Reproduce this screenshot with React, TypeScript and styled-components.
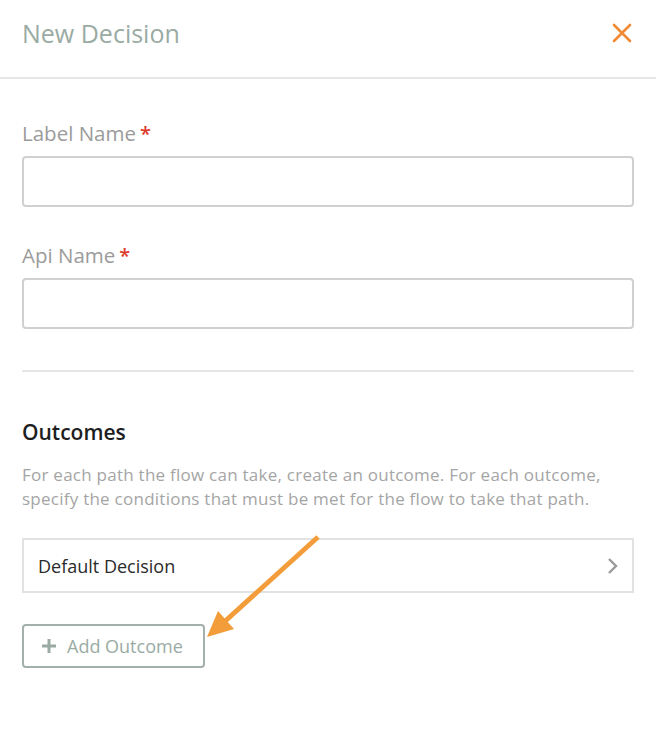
import React from "react";
import styled, { createGlobalStyle } from "styled-components";

const Global = createGlobalStyle`
  html, body { margin: 0; padding: 0; background: #ffffff; }
  body { font-family: "Open Sans", "Noto Sans", Arial, sans-serif; }
  * { box-sizing: border-box; }
`;

const Page = styled.div`
  position: relative;
  width: 656px;
  height: 742px;
  background: #fff;
  overflow: hidden;
`;

const Header = styled.header`
  display: flex;
  align-items: center;
  justify-content: space-between;
  height: 79px;
  padding: 0 22px 11px 22px;
  border-bottom: 2px solid #e6e6e6;
`;

const Title = styled.h1`
  margin: 0;
  font-size: 25px;
  font-weight: 400;
  line-height: 34px;
  color: #9aaba4;
`;

const CloseButton = styled.button`
  display: flex;
  align-items: center;
  justify-content: center;
  width: 24px;
  height: 24px;
  padding: 0;
  border: none;
  background: transparent;
  cursor: pointer;
`;

const Body = styled.div`
  display: flex;
  flex-direction: column;
  padding: 40px 22px 0 22px;
`;

const Field = styled.div<{ $gap?: number }>`
  display: flex;
  flex-direction: column;
  gap: 8px;
  margin-bottom: ${(p) => p.$gap ?? 0}px;
`;

const Label = styled.label`
  display: flex;
  align-items: baseline;
  gap: 4px;
  font-size: 20.5px;
  line-height: 28px;
  color: #9b9b9b;
`;

const Required = styled.span`
  color: #e0392c;
  font-size: 20px;
  font-weight: 600;
`;

const Input = styled.input`
  width: 100%;
  height: 51px;
  border: 2px solid #d0d0d0;
  border-radius: 4px;
  padding: 0 12px;
  font-family: inherit;
  font-size: 16px;
  outline: none;
`;

const Divider = styled.hr`
  margin: 41px 0 0 0;
  border: none;
  border-top: 2px solid #e6e6e6;
`;

const SectionTitle = styled.h2`
  margin: 46px 0 0 0;
  font-size: 21px;
  font-weight: 600;
  line-height: 28px;
  color: #1e1e1e;
`;

const Description = styled.p`
  margin: 17px 0 0 0;
  font-size: 17px;
  letter-spacing: 0.25px;
  line-height: 24px;
  color: #a5a5a5;
`;

const OutcomeRow = styled.button`
  display: flex;
  align-items: center;
  justify-content: space-between;
  width: 100%;
  height: 55px;
  margin-top: 27px;
  padding: 0 14px 0 14px;
  border: 2px solid #e2e2e2;
  background: #fff;
  font-family: inherit;
  font-size: 18px;
  color: #2b2b2b;
  text-align: left;
  cursor: pointer;
`;

const AddButton = styled.button`
  display: flex;
  align-items: center;
  gap: 10px;
  align-self: flex-start;
  width: 183px;
  height: 44px;
  margin-top: 31px;
  padding: 0 0 0 17px;
  border: 2px solid #a3b0ac;
  border-radius: 4px;
  background: #fff;
  font-family: inherit;
  font-size: 18px;
  color: #9aaba4;
  cursor: pointer;
`;

const ArrowLayer = styled.svg`
  position: absolute;
  left: 0;
  top: 0;
  pointer-events: none;
`;

export default function App() {
  return (
    <>
      <Global />
      <Page>
        <Header>
          <Title>New Decision</Title>
          <CloseButton aria-label="Close">
            <svg width="20" height="20" viewBox="0 0 20 20">
              <path d="M2 2 L18 18 M18 2 L2 18" stroke="#f08a35" strokeWidth="2.6" strokeLinecap="round" />
            </svg>
          </CloseButton>
        </Header>
        <Body>
          <Field $gap={34}>
            <Label>
              Label Name<Required>*</Required>
            </Label>
            <Input />
          </Field>
          <Field>
            <Label>
              Api Name<Required>*</Required>
            </Label>
            <Input />
          </Field>
          <Divider />
          <SectionTitle>Outcomes</SectionTitle>
          <Description>
            For each path the flow can take, create an outcome. For each outcome, specify the conditions that must be met for the flow to take that path.
          </Description>
          <OutcomeRow>
            <span>Default Decision</span>
            <svg width="12" height="18" viewBox="0 0 12 18">
              <path d="M3 2 L10 9 L3 16" fill="none" stroke="#9a9a9a" strokeWidth="2.4" />
            </svg>
          </OutcomeRow>
          <AddButton>
            <svg width="16" height="16" viewBox="0 0 16 16">
              <path d="M8 1 V15 M1 8 H15" stroke="#9aaba4" strokeWidth="3" />
            </svg>
            Add Outcome
          </AddButton>
        </Body>
        <ArrowLayer width="656" height="742" viewBox="0 0 656 742">
          <line x1="318" y1="537" x2="222" y2="624" stroke="#f39c3a" strokeWidth="5" />
          <polygon points="207,637 218,611 234,629" fill="#f39c3a" />
        </ArrowLayer>
      </Page>
    </>
  );
}
